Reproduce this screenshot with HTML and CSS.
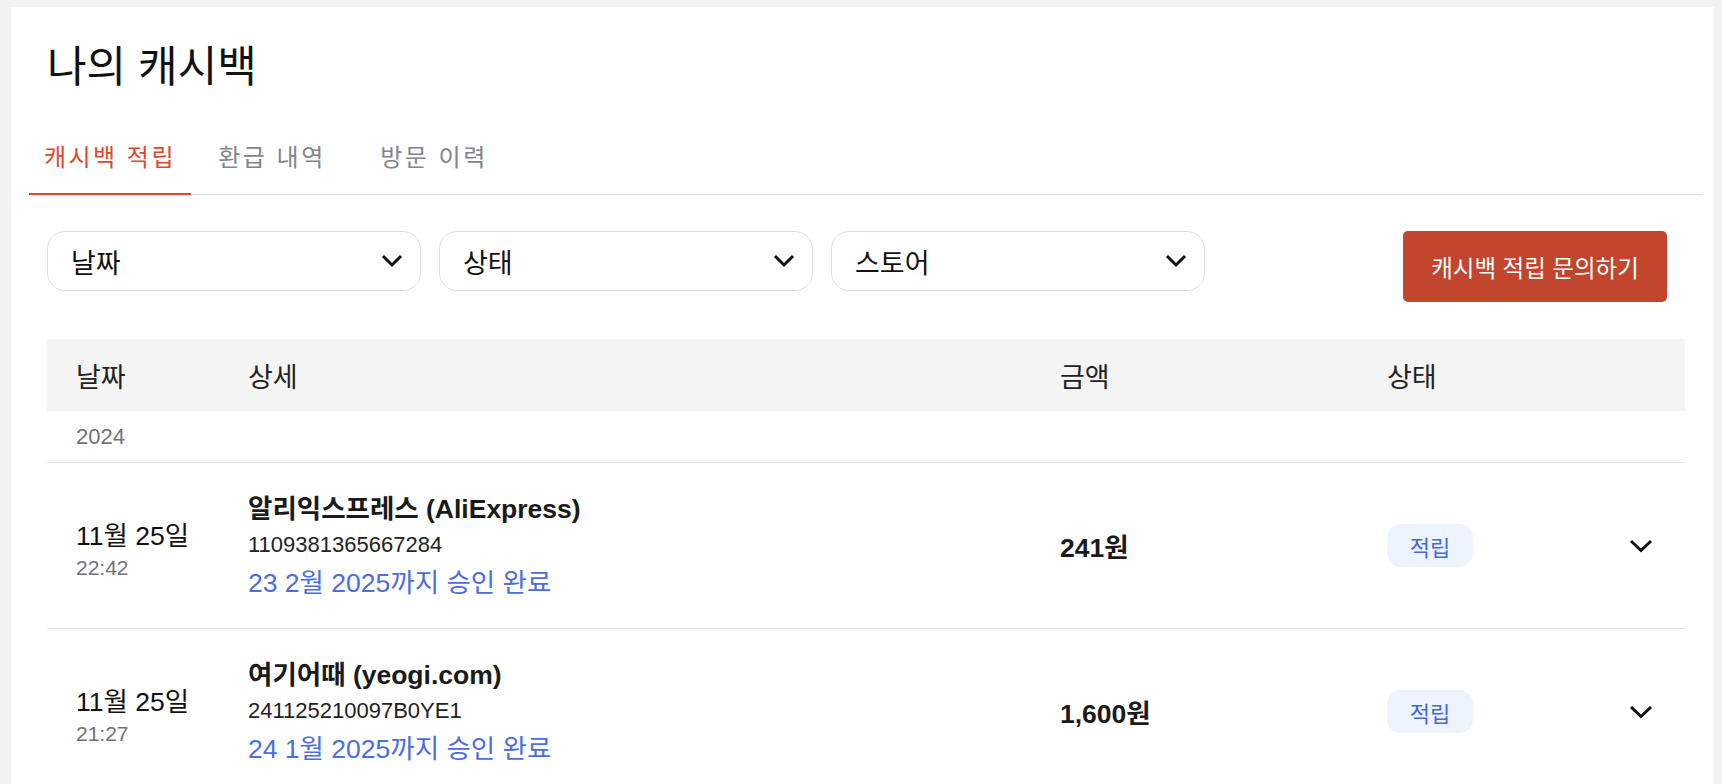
FILE: index.html
```html
<!DOCTYPE html>
<html lang="ko">
<head>
<meta charset="utf-8">
<title>나의 캐시백</title>
<link rel="stylesheet" href="styles.css">
</head>
<body>
<div class="page">
  <main class="card">
    <h1 class="title">나의 캐시백</h1>
    <nav class="tabs">
      <a class="tab active">캐시백 적립</a>
      <a class="tab">환급 내역</a>
      <a class="tab">방문 이력</a>
    </nav>
    <section class="content">
      <div class="filters">
        <button class="select"><span>날짜</span><svg class="chev-sm" viewBox="0 0 22 14"><path d="M2 2 L11 11 L20 2"/></svg></button>
        <button class="select"><span>상태</span><svg class="chev-sm" viewBox="0 0 22 14"><path d="M2 2 L11 11 L20 2"/></svg></button>
        <button class="select"><span>스토어</span><svg class="chev-sm" viewBox="0 0 22 14"><path d="M2 2 L11 11 L20 2"/></svg></button>
        <button class="cta">캐시백 적립 문의하기</button>
      </div>
      <div class="table">
        <div class="thead">
          <div>날짜</div>
          <div>상세</div>
          <div>금액</div>
          <div>상태</div>
          <div></div>
        </div>
        <div class="year">2024</div>
        <div class="row">
          <div class="when">
            <div class="date">11월 25일</div>
            <div class="time">22:42</div>
          </div>
          <div class="detail">
            <div class="store">알리익스프레스 (AliExpress)</div>
            <div class="order">1109381365667284</div>
            <div class="approve">23 2월 2025까지 승인 완료</div>
          </div>
          <div class="amount">241원</div>
          <div class="status"><span class="badge">적립</span></div>
          <svg class="chev" viewBox="0 0 24 14"><path d="M2 2 L12 11.5 L22 2"/></svg>
        </div>
        <div class="row">
          <div class="when">
            <div class="date">11월 25일</div>
            <div class="time">21:27</div>
          </div>
          <div class="detail">
            <div class="store">여기어때 (yeogi.com)</div>
            <div class="order">241125210097B0YE1</div>
            <div class="approve">24 1월 2025까지 승인 완료</div>
          </div>
          <div class="amount">1,600원</div>
          <div class="status"><span class="badge">적립</span></div>
          <svg class="chev" viewBox="0 0 24 14"><path d="M2 2 L12 11.5 L22 2"/></svg>
        </div>
      </div>
    </section>
  </main>
</div>
</body>
</html>
```
FILE: styles.css
```css
html, body {
  margin: 0;
}
html {
  overflow: hidden;
}
body {
  background: #f2f2f2;
  font-family: "Liberation Sans", "Noto Sans CJK KR", sans-serif;
  color: #111;
}
.page {
  padding: 7px 8px 0 11px;
}
.card {
  background: #fff;
  padding: 36px 12px 0 18px;
  min-height: 820px;
}
.title {
  margin: 0;
  padding-left: 18px;
  font-size: 43px;
  line-height: 48px;
  font-weight: 400;
  color: #111;
}
.tabs {
  display: flex;
  margin-top: 52px;
  border-bottom: 1px solid #dcdcdc;
}
.tab {
  width: 162px;
  text-align: center;
  font-size: 24px;
  line-height: 30px;
  letter-spacing: 2.5px;
  color: #80848c;
  padding-bottom: 20px;
  border-bottom: 2px solid transparent;
  margin-bottom: -1px;
}
.tab.active {
  color: #e0462b;
  border-bottom-color: #e0462b;
}
.content {
  padding: 0 17px 0 18px;
}
.filters {
  display: flex;
  align-items: flex-start;
  gap: 18px;
  margin-top: 36px;
  padding-right: 18px;
}
.select {
  width: 374px;
  height: 60px;
  box-sizing: border-box;
  border: 1px solid #dedede;
  border-radius: 18px;
  background: #fff;
  display: flex;
  align-items: center;
  justify-content: space-between;
  padding: 0 17px 0 23px;
  font-family: inherit;
  font-size: 27px;
  color: #111;
}
.chev-sm {
  width: 22px;
  height: 14px;
  fill: none;
  stroke: #111;
  stroke-width: 3;
}
.cta {
  margin-left: auto;
  width: 264px;
  height: 71px;
  border: 0;
  border-radius: 5px;
  background: #c2452d;
  color: #fff;
  font-family: inherit;
  font-size: 23.5px;
}
.table {
  margin-top: 37px;
}
.thead, .row {
  display: grid;
  grid-template-columns: 172px 812px 327px 1fr 24px;
  padding: 0 32px 0 29px;
  align-items: center;
}
.thead {
  height: 72px;
  background: #f4f4f4;
  font-size: 27px;
  color: #222;
}
.year {
  height: 51px;
  display: flex;
  align-items: center;
  padding-left: 29px;
  font-size: 22px;
  color: #6f727a;
  border-bottom: 1px solid #e2e2e2;
}
.row {
  height: 165px;
  border-bottom: 1px solid #e2e2e2;
}
.when {
  margin-top: 12px;
}
.date {
  font-size: 26.5px;
  line-height: 32px;
  color: #111;
}
.time {
  font-size: 21px;
  line-height: 32px;
  color: #6f727a;
}
.store {
  font-size: 26.5px;
  font-weight: 700;
  line-height: 36px;
  color: #1a1a1a;
}
.order {
  font-size: 22px;
  line-height: 35px;
  color: #222;
}
.approve {
  font-size: 26.5px;
  line-height: 36px;
  margin-top: 3px;
  color: #4a6ee0;
}
.amount {
  font-size: 26.5px;
  font-weight: 700;
  color: #1a1a1a;
}
.badge {
  display: inline-flex;
  align-items: center;
  justify-content: center;
  width: 86px;
  height: 43px;
  border-radius: 14px;
  background: #eef4ff;
  color: #4467e0;
  font-size: 22px;
}
.chev {
  width: 24px;
  height: 14px;
  fill: none;
  stroke: #111;
  stroke-width: 3;
}
```
